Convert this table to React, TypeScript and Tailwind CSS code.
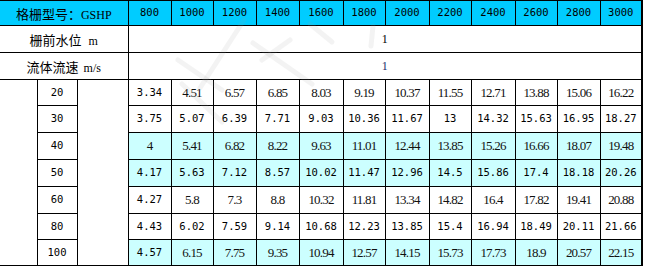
import React from 'react';

const sizes = ['800', '1000', '1200', '1400', '1600', '1800', '2000', '2200', '2400', '2600', '2800', '3000'];
const widths = ['w-[43px]', 'w-[42px]', 'w-[43px]', 'w-[43px]', 'w-[44px]', 'w-[42px]', 'w-[44px]', 'w-[42px]', 'w-[44px]', 'w-[42px]', 'w-[43px]', 'w-[42px]'];

// kind: mono = all cells in the wide font, mixed = first wide then serif, serif = all serif
const rows = [
  { level: '20', kind: 'mixed', hi: false, h: 'h-[26px]', vals: ['3.34', '4.51', '6.57', '6.85', '8.03', '9.19', '10.37', '11.55', '12.71', '13.88', '15.06', '16.22'] },
  { level: '30', kind: 'mono', hi: false, h: 'h-[27px]', vals: ['3.75', '5.07', '6.39', '7.71', '9.03', '10.36', '11.67', '13', '14.32', '15.63', '16.95', '18.27'] },
  { level: '40', kind: 'serif', hi: true, h: 'h-[27px]', vals: ['4', '5.41', '6.82', '8.22', '9.63', '11.01', '12.44', '13.85', '15.26', '16.66', '18.07', '19.48'] },
  { level: '50', kind: 'mono', hi: true, h: 'h-[27px]', vals: ['4.17', '5.63', '7.12', '8.57', '10.02', '11.47', '12.96', '14.5', '15.86', '17.4', '18.18', '20.26'] },
  { level: '60', kind: 'mixed', hi: false, h: 'h-[27px]', vals: ['4.27', '5.8', '7.3', '8.8', '10.32', '11.81', '13.34', '14.82', '16.4', '17.82', '19.41', '20.88'] },
  { level: '80', kind: 'mono', hi: false, h: 'h-[26px]', vals: ['4.43', '6.02', '7.59', '9.14', '10.68', '12.23', '13.85', '15.4', '16.94', '18.49', '20.11', '21.66'] },
  { level: '100', kind: 'mixed', hi: true, h: 'h-[26px]', vals: ['4.57', '6.15', '7.75', '9.35', '10.94', '12.57', '14.15', '15.73', '17.73', '18.9', '20.57', '22.15'] },
];

const mono = "font-['DejaVu_Sans_Mono',monospace] text-[10.5px] text-black";
const serif = "font-['Liberation_Serif',serif] text-[13px] tracking-[-0.8px] text-[#111]";
const cjk = "font-['Noto_Sans_CJK_SC',sans-serif] text-[13px] text-black";
const latin = "font-['Liberation_Serif',serif] text-[12px] text-black";

function App() {
  return (
    <div className="relative w-[645px] h-[266px] bg-white">
      <table className="table-fixed border-collapse w-[643px]">
        <colgroup>
          <col className="w-[37px]" />
          <col className="w-[40px]" />
          <col className="w-[51px]" />
          {widths.map((w, i) => (
            <col key={i} className={w} />
          ))}
        </colgroup>
        <tbody>
          <tr className="h-[25px] bg-[#00ccff]">
            <td colSpan={3} className="border-t border-b border-r border-black text-center p-0 whitespace-nowrap">
              <span className={cjk}>格栅型号：</span>
              <span className={latin}>GSHP</span>
            </td>
            {sizes.map((s, i) => (
              <td key={s} className={`border border-black text-center p-0 ${mono} ${i === sizes.length - 1 ? 'border-r-2' : ''}`}>
                {s}
              </td>
            ))}
          </tr>
          <tr className="h-[27px]">
            <td colSpan={3} className="border-b border-r border-black text-center p-0 whitespace-nowrap">
              <span className={cjk}>栅前水位</span>
              <span className={`${latin} ml-[7px]`}>m</span>
            </td>
            <td colSpan={12} className="border border-r-2 border-black text-center p-0 font-['Liberation_Serif',serif] text-[12px]">
              1
            </td>
          </tr>
          <tr className="h-[27px]">
            <td colSpan={3} className="border-b border-r border-black text-center p-0 whitespace-nowrap">
              <span className={cjk}>流体流速</span>
              <span className={`${latin} ml-[5px]`}>m/s</span>
            </td>
            <td colSpan={12} className="border border-r-2 border-black text-center p-0 font-['Liberation_Serif',serif] text-[12px] text-[#1a2a6a]">
              1
            </td>
          </tr>
          {rows.map((r, ri) => (
            <tr key={r.level} className={r.h}>
              {ri === 0 && <td rowSpan={rows.length} className="border-b border-black p-0" />}
              <td className={`border border-black text-center p-0 ${mono}`}>{r.level}</td>
              {ri === 0 && <td rowSpan={rows.length} className="border-b border-r border-black p-0" />}
              {r.vals.map((v, i) => {
                const isMono = r.kind === 'mono' || (r.kind === 'mixed' && i === 0);
                return (
                  <td
                    key={i}
                    className={`border border-black text-center p-0 whitespace-nowrap ${r.hi ? 'bg-[#ccffff]' : 'bg-white'} ${isMono ? mono : serif} ${i === r.vals.length - 1 ? 'border-r-2' : ''}`}
                  >
                    {v}
                  </td>
                );
              })}
            </tr>
          ))}
        </tbody>
      </table>

      {/* faint watermark strokes */}
      <svg className="absolute left-0 top-0 pointer-events-none" width="645" height="266" viewBox="0 0 645 266">
        <g stroke="#9a9a9a" strokeOpacity="0.12" strokeWidth="5" fill="none" strokeLinecap="round">
          <path d="M200 88 L244 20" />
          <path d="M253 43 L312 84" />
          <path d="M310 24 L332 42" />
          <path d="M373 26 L371 46" />
          <path d="M178 60 L222 90" />
          <path d="M182 84 L222 122" />
          <path d="M262 60 L290 40" />
        </g>
      </svg>
    </div>
  );
}

export default App;
